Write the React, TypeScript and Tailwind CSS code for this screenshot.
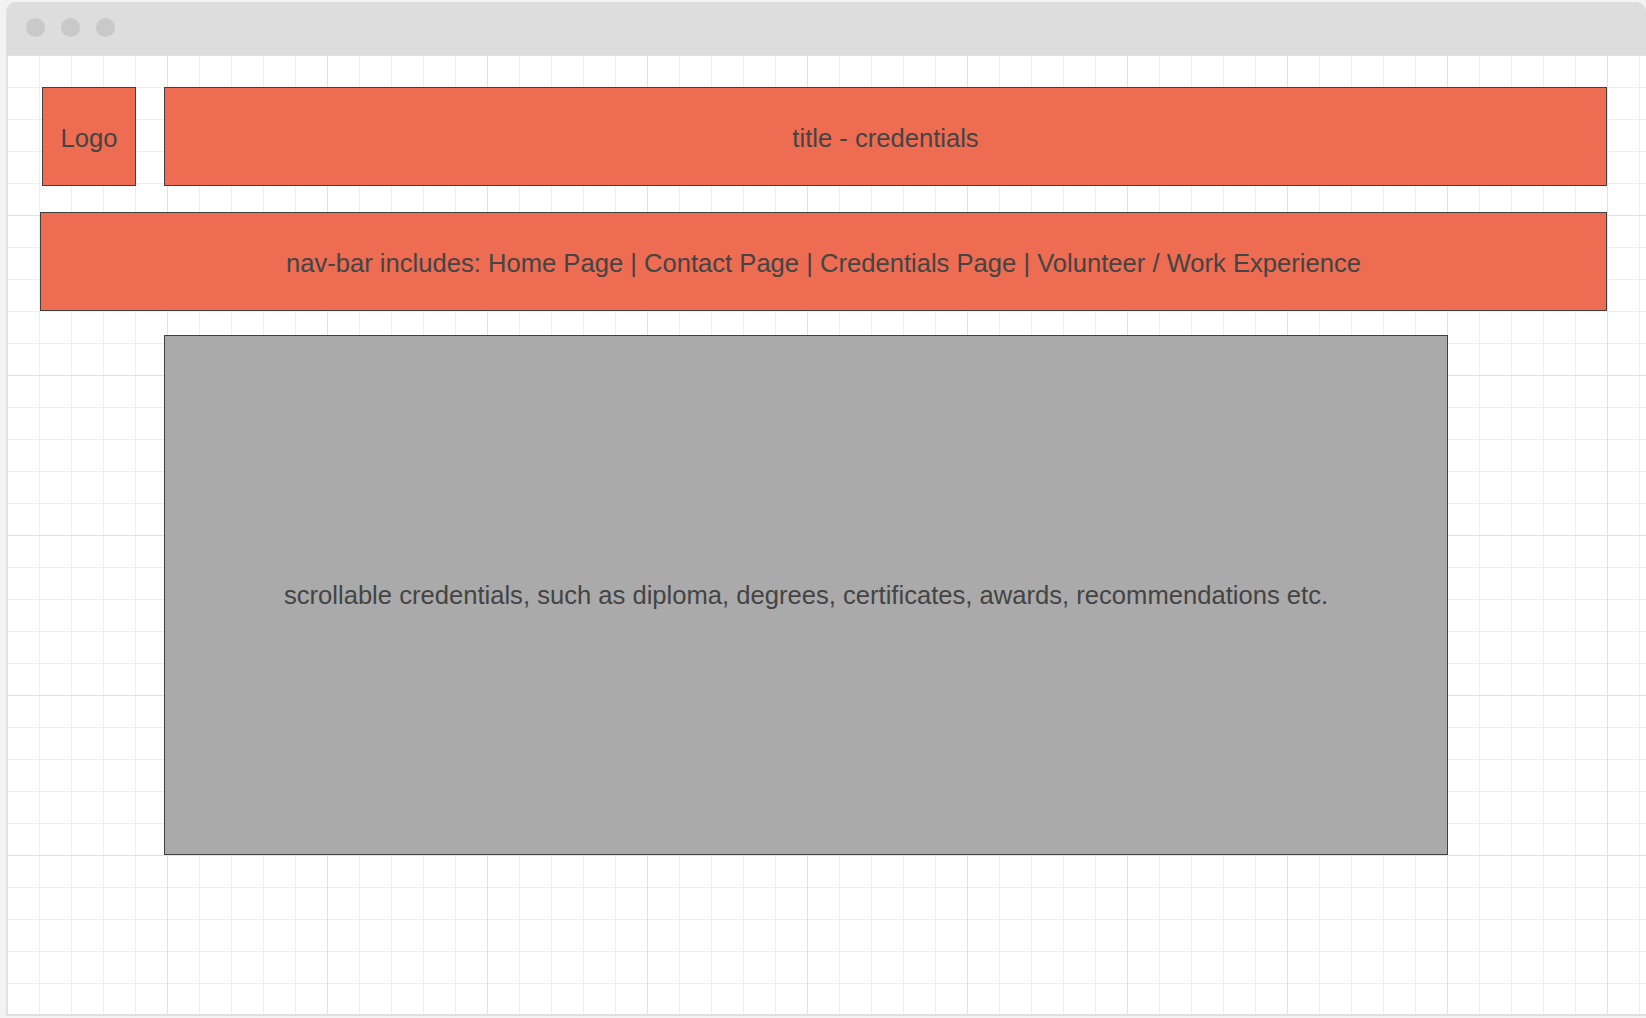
const Box = ({
  className,
  children,
}: {
  className: string;
  children: React.ReactNode;
}) => (
  <div
    className={`flex items-center justify-center border border-[#404040] text-[25.6px] text-[#444444] ${className}`}
  >
    {children}
  </div>
);

const App = () => {
  return (
    <div className="w-[1646px] h-[1018px] bg-[#f3f3f3] pt-[2px] pl-[6px] overflow-hidden font-['Liberation_Sans',Arial,sans-serif]">
      <div className="w-[1640px] h-[1014px] flex flex-col rounded-t-[9px] overflow-hidden border-l border-b-2 border-[#e0e0e0] bg-white">
        {/* title bar */}
        <div className="h-[53px] shrink-0 bg-[#dddddd] flex items-center gap-[16px] pl-[19px] pb-[2px]">
          <span className="w-[19px] h-[19px] rounded-full bg-[#c9c9c9]"></span>
          <span className="w-[19px] h-[19px] rounded-full bg-[#c9c9c9]"></span>
          <span className="w-[19px] h-[19px] rounded-full bg-[#c9c9c9]"></span>
        </div>

        {/* grid canvas */}
        <div className="flex-1 flex flex-col pt-[32px] bg-[linear-gradient(to_right,#e2e2e2_1px,transparent_1px),linear-gradient(to_bottom,#e2e2e2_1px,transparent_1px),linear-gradient(to_right,#eeeeee_1px,transparent_1px),linear-gradient(to_bottom,#eeeeee_1px,transparent_1px)] bg-[size:160px_160px,160px_160px,32px_32px,32px_32px]">
          <div className="flex gap-[28px] ml-[35px]">
            <Box className="w-[94px] h-[99px] pt-[4px] bg-[#ed6c52]">Logo</Box>
            <Box className="w-[1443px] h-[99px] pt-[4px] bg-[#ed6c52]">title - credentials</Box>
          </div>

          <Box className="ml-[33px] mt-[26px] w-[1567px] h-[99px] pt-[4px] bg-[#ed6c52]">
            nav-bar includes: Home Page | Contact Page | Credentials Page | Volunteer / Work Experience
          </Box>

          <Box className="ml-[157px] mt-[24px] w-[1284px] h-[520px] bg-[#aaaaaa]">
            scrollable credentials, such as diploma, degrees, certificates, awards, recommendations etc.
          </Box>
        </div>
      </div>
    </div>
  );
};

export default App;
